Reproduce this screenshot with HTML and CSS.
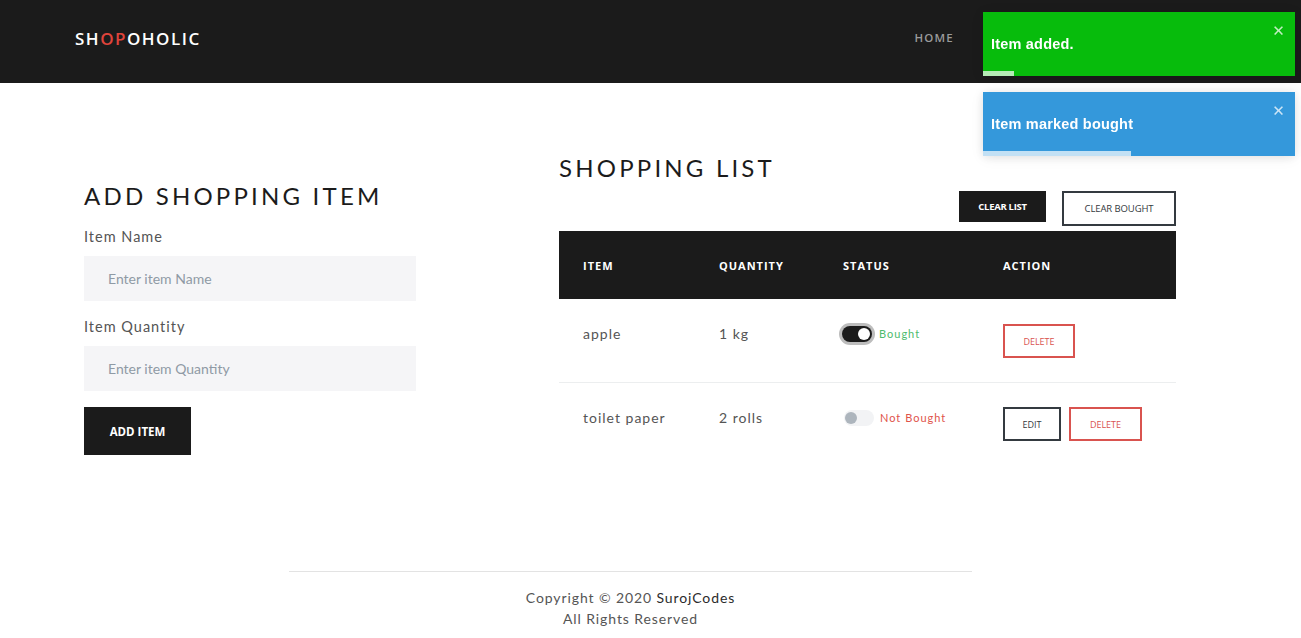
FILE: index.html
```html
<!DOCTYPE html>
<html lang="en">
<head>
<meta charset="utf-8">
<title>Shopoholic</title>
<link rel="stylesheet" href="styles.css">
</head>
<body>
<header class="topbar">
  <div class="logo">SH<span class="logo-accent">OP</span>OHOLIC</div>
  <nav class="nav"><a class="nav-link" href="#">HOME</a></nav>
</header>

<main class="main">
  <section class="form-col">
    <h2 class="section-title form-title">ADD SHOPPING ITEM</h2>
    <label class="field-label">Item Name</label>
    <input class="field-input" type="text" placeholder="Enter item Name">
    <label class="field-label field-label-2">Item Quantity</label>
    <input class="field-input" type="text" placeholder="Enter item Quantity">
    <button class="btn-dark btn-add">ADD ITEM</button>
  </section>

  <section class="list-col">
    <h2 class="section-title">SHOPPING LIST</h2>
    <div class="list-actions">
      <button class="btn-dark btn-clear">CLEAR LIST</button>
      <button class="btn-outline btn-clear-bought">CLEAR BOUGHT</button>
    </div>
    <div class="table">
      <div class="table-head">
        <div class="th">ITEM</div>
        <div class="th">QUANTITY</div>
        <div class="th">STATUS</div>
        <div class="th">ACTION</div>
      </div>
      <div class="table-row">
        <div class="td">apple</div>
        <div class="td">1 kg</div>
        <div class="td status">
          <span class="toggle toggle-on"><span class="knob"></span></span>
          <span class="status-text bought">Bought</span>
        </div>
        <div class="td actions">
          <button class="btn-small btn-danger">DELETE</button>
        </div>
      </div>
      <div class="table-row">
        <div class="td">toilet paper</div>
        <div class="td">2 rolls</div>
        <div class="td status">
          <span class="toggle toggle-off"><span class="knob"></span></span>
          <span class="status-text not-bought">Not Bought</span>
        </div>
        <div class="td actions">
          <button class="btn-small btn-edit">EDIT</button>
          <button class="btn-small btn-danger">DELETE</button>
        </div>
      </div>
    </div>
  </section>
</main>

<footer class="footer">
  <div class="footer-inner">
    <p class="footer-line">Copyright © 2020 <span class="footer-brand">SurojCodes</span></p>
    <p class="footer-line">All Rights Reserved</p>
  </div>
</footer>

<div class="toasts">
  <div class="toast toast-success">
    <span class="toast-text">Item added.</span>
    <span class="toast-close">✕</span>
    <span class="toast-progress progress-1"></span>
  </div>
  <div class="toast toast-info">
    <span class="toast-text">Item marked bought</span>
    <span class="toast-close">✕</span>
    <span class="toast-progress progress-2"></span>
  </div>
</div>
</body>
</html>
```

FILE: styles.css
```css
* { box-sizing: border-box; }

body {
  margin: 0;
  font-family: Lato, "Noto Sans", sans-serif;
  color: #555;
  background: #fff;
}

.topbar {
  height: 83px;
  background: #1b1b1b;
  display: flex;
  align-items: center;
  justify-content: space-between;
  padding: 0 347px 0 75px;
}

.logo {
  color: #fff;
  font-family: "Open Sans", sans-serif;
  font-weight: 600;
  font-size: 17px;
  letter-spacing: 1.5px;
  padding-bottom: 7px;
}
.logo-accent { color: #e0443b; }

.nav-link {
  color: #9a9a9a;
  font-family: "Open Sans", sans-serif;
  font-weight: 600;
  font-size: 11.5px;
  letter-spacing: 1.2px;
  text-decoration: none;
  display: block;
  padding-bottom: 8px;
}

.main {
  display: flex;
  padding-left: 84px;
  height: 488px;
}

.form-col {
  width: 475px;
  padding-top: 99px;
}

.list-col {
  width: 617px;
  padding-top: 71px;
}

.section-title {
  margin: 0;
  font-family: Lato, sans-serif;
  font-weight: 400;
  font-size: 24px;
  line-height: 28px;
  letter-spacing: 3.2px;
  color: #1b1b1b;
}

.field-label {
  display: block;
  margin-top: 17px;
  font-size: 14.5px;
  line-height: 20px;
  letter-spacing: 1px;
  color: #555;
}
.field-label-2 { margin-top: 16px; }

.field-input {
  display: block;
  margin-top: 9px;
  width: 332px;
  height: 45px;
  border: none;
  background: #f5f5f7;
  padding: 0 24px;
  font-family: Lato, sans-serif;
  font-size: 14px;
  color: #333;
  outline: none;
}
.field-input::placeholder { color: #8f9aa5; }

.btn-dark {
  background: #1b1b1b;
  color: #fff;
  border: none;
  font-family: "Open Sans", sans-serif;
  font-weight: 700;
  cursor: pointer;
}

.btn-add {
  display: block;
  margin-top: 16px;
  width: 107px;
  height: 48px;
  font-size: 11.5px;
  letter-spacing: 0;
}

.list-actions {
  display: flex;
  justify-content: flex-end;
  align-items: flex-start;
  gap: 16px;
  margin-top: 9px;
  margin-bottom: 5px;
}

.btn-clear {
  width: 87px;
  height: 31px;
  font-size: 9.5px;
  letter-spacing: -0.3px;
}

.btn-outline {
  background: #fff;
  border: 2px solid #343a40;
  color: #343a40;
  font-family: "Open Sans", sans-serif;
  cursor: pointer;
}

.btn-clear-bought {
  width: 114px;
  height: 35px;
  font-size: 9.5px;
  letter-spacing: -0.1px;
}

.table-head,
.table-row {
  display: grid;
  grid-template-columns: 136px 124px 160px 197px;
}

.table-head {
  background: #1b1b1b;
  height: 68px;
  align-items: center;
}

.th {
  padding-left: 24px;
  color: #fff;
  font-family: "Open Sans", sans-serif;
  font-weight: 700;
  font-size: 11px;
  letter-spacing: 1px;
}

.table-row {
  height: 84px;
  border-bottom: 1px solid #eceeef;
}
.table-row:last-child { border-bottom: none; }

.td {
  padding: 25px 0 0 24px;
  font-size: 14px;
  line-height: 20px;
  letter-spacing: 1px;
  color: #555;
}

.status {
  display: flex;
  align-items: flex-start;
  padding-left: 23px;
}

.toggle {
  position: relative;
  display: inline-block;
  width: 30px;
  height: 16px;
  border-radius: 8px;
  margin-top: 2px;
  flex: none;
}
.toggle-on {
  background: #1b1b1b;
  box-shadow: 0 0 0 3px #bdbdbd;
}
.toggle-off {
  background: #f2f3f5;
  margin-left: 2px;
}
.knob {
  position: absolute;
  top: 2px;
  width: 12px;
  height: 12px;
  border-radius: 50%;
}
.toggle-on .knob { right: 2px; background: #fff; }
.toggle-off .knob { left: 1px; background: #adb5bd; }

.status-text {
  margin-left: 7px;
  font-size: 11px;
  letter-spacing: 1px;
  line-height: 20px;
}
.bought { color: #4cbb6c; }
.not-bought { color: #e0524a; margin-left: 6px; }

.actions {
  display: flex;
  gap: 8px;
  padding-top: 25px;
}

.btn-small {
  height: 34px;
  background: #fff;
  font-family: "Open Sans", sans-serif;
  font-size: 9px;
  letter-spacing: 0;
  cursor: pointer;
}
.btn-danger {
  width: 72px;
  border: 2px solid #d9534f;
  color: #d9534f;
}
.btn-edit {
  width: 58px;
  border: 2px solid #343a40;
  color: #343a40;
}
.table-row:last-child .actions { padding-top: 24px; }
.table-row:last-child .btn-danger { width: 73px; }

.footer { padding-left: 289px; }
.footer-inner {
  width: 683px;
  border-top: 1px solid #e3e3e3;
  padding-top: 15px;
  text-align: center;
}
.footer-line {
  margin: 0;
  font-size: 14px;
  line-height: 21px;
  letter-spacing: 0.9px;
  color: #555;
}
.footer-brand { color: #2b2b2b; }

.toasts {
  position: fixed;
  top: 12px;
  right: 6px;
  width: 312px;
  display: flex;
  flex-direction: column;
  gap: 16px;
}

.toast {
  position: relative;
  height: 64px;
  display: flex;
  align-items: center;
  padding: 0 8px 0 8px;
  color: #fff;
  font-family: "Liberation Sans", Arial, sans-serif;
  font-weight: 700;
  font-size: 14.5px;
  letter-spacing: 0.2px;
  box-shadow: 0 1px 10px rgba(0,0,0,0.1), 0 2px 15px rgba(0,0,0,0.05);
}
.toast-success { background: #07bc0c; }
.toast-info { background: #3498db; }

.toast-close {
  position: absolute;
  top: 9px;
  right: 10px;
  font-size: 15px;
  line-height: 20px;
  font-family: "DejaVu Sans", sans-serif;
  font-weight: 700;
  opacity: 0.75;
}

.toast-progress {
  position: absolute;
  left: 0;
  bottom: 0;
  height: 5px;
  background: rgba(255,255,255,0.7);
}
.progress-1 { width: 31px; }
.progress-2 { width: 148px; }
```
